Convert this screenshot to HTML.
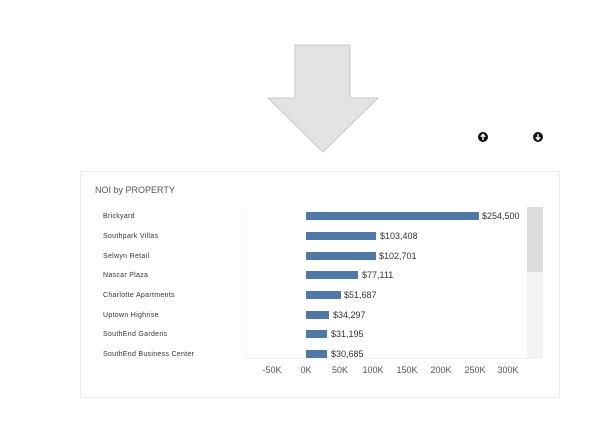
<!DOCTYPE html>
<html><head><style>
body{margin:0;width:613px;height:423px;background:#fff;position:relative;font-family:"Liberation Sans",sans-serif;overflow:hidden}
.a{position:absolute}
.lbl{position:absolute;left:103px;font-size:7px;color:#333;letter-spacing:.3px;margin-top:1px}
.bar{position:absolute;left:306px;height:8px;background:#4e79a7}
.val{position:absolute;font-size:9px;color:#333}
.ax{position:absolute;top:365px;font-size:9px;color:#555;width:40px;text-align:center}
</style></head><body>
<svg class="a" style="left:0;top:0" width="613" height="423">
<polygon points="295,45 350,45 350,98 378,98 323,152 268,98 295,98" fill="#e3e3e3" stroke="#c8c8c8" stroke-width="1"/>
<circle cx="483" cy="137" r="5" fill="#111"/><path d="M483 140V134.5M480.8 136.8L483 134.4L485.2 136.8" stroke="#fff" stroke-width="1.4" fill="none"/>
<circle cx="538" cy="137" r="5" fill="#111"/><path d="M538 134V139.5M535.8 137.2L538 139.6L540.2 137.2" stroke="#fff" stroke-width="1.4" fill="none"/>
</svg>
<div class="a" style="left:80px;top:171px;width:480px;height:227px;border:1px solid #eee;box-sizing:border-box"></div>
<div class="a" style="left:95px;top:185px;font-size:9px;color:#555">NOI by PROPERTY</div>
<div class="a" style="left:245px;top:207px;width:282px;height:152px;border-bottom:1px solid #f0f0f0;border-left:1px solid #f6f6f6;box-sizing:border-box"></div>
<div class="a" style="left:527px;top:207px;width:16px;height:152px;background:#f3f3f3"></div>
<div class="a" style="left:527px;top:207px;width:16px;height:65px;background:#dcdcdc"></div>
<div class="lbl" style="top:212px">Brickyard</div><div class="bar" style="top:212px;width:173px"></div><div class="val" style="left:482px;top:211px">$254,500</div>
<div class="lbl" style="top:232px">Southpark Villas</div><div class="bar" style="top:232px;width:70px"></div><div class="val" style="left:380px;top:231px">$103,408</div>
<div class="lbl" style="top:252px">Selwyn Retail</div><div class="bar" style="top:252px;width:70px"></div><div class="val" style="left:379px;top:251px">$102,701</div>
<div class="lbl" style="top:271px">Nascar Plaza</div><div class="bar" style="top:271px;width:52px"></div><div class="val" style="left:362px;top:270px">$77,111</div>
<div class="lbl" style="top:291px">Charlotte Apartments</div><div class="bar" style="top:291px;width:35px"></div><div class="val" style="left:344px;top:290px">$51,687</div>
<div class="lbl" style="top:311px">Uptown Highrise</div><div class="bar" style="top:311px;width:23px"></div><div class="val" style="left:333px;top:310px">$34,297</div>
<div class="lbl" style="top:330px">SouthEnd Gardens</div><div class="bar" style="top:330px;width:21px"></div><div class="val" style="left:331px;top:329px">$31,195</div>
<div class="lbl" style="top:350px">SouthEnd Business Center</div><div class="bar" style="top:350px;width:21px"></div><div class="val" style="left:331px;top:349px">$30,685</div>
<div class="ax" style="left:252px">-50K</div><div class="ax" style="left:286px">0K</div><div class="ax" style="left:320px">50K</div><div class="ax" style="left:353px">100K</div><div class="ax" style="left:387px">150K</div><div class="ax" style="left:421px">200K</div><div class="ax" style="left:455px">250K</div><div class="ax" style="left:488px">300K</div>
</body></html>
